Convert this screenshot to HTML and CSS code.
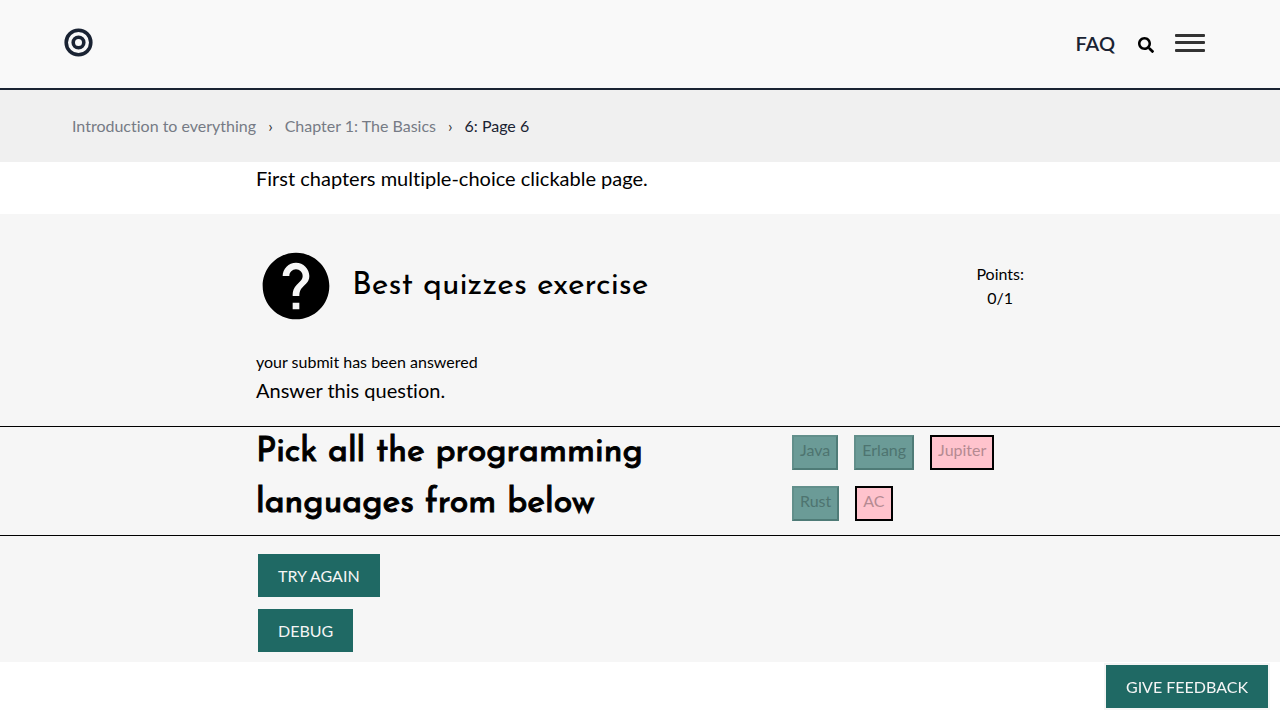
FILE: index.html
```html
<!DOCTYPE html>
<html lang="en">
<head>
<meta charset="utf-8">
<meta name="viewport" content="width=device-width, initial-scale=1">
<title>6: Page 6</title>
<link rel="stylesheet" href="styles.css">
</head>
<body>
<header class="topbar">
  <a class="logo" href="#" aria-label="Home">
    <svg viewBox="0 0 30 30" width="30" height="30" fill="none" stroke="#1a2333" stroke-width="3.6"><circle cx="14.500" cy="14.500" r="12.300"/><circle cx="14.500" cy="14.500" r="5.300"/></svg>
  </a>
  <nav class="topnav">
    <a class="faq" href="#">FAQ</a>
    <button class="icon-button" type="button" aria-label="Search">
      <svg viewBox="0 0 512 512" width="16" height="16"><path d="M505 442.700L405.300 343c-4.500-4.500-10.600-7-17-7H372c27.600-35.300 44-79.700 44-128C416 93.100 322.900 0 208 0S0 93.100 0 208s93.100 208 208 208c48.300 0 92.700-16.400 128-44v16.300c0 6.400 2.500 12.500 7 17l99.700 99.700c9.400 9.400 24.600 9.400 33.900 0l28.300-28.300c9.400-9.400 9.400-24.600.1-34zM208 336c-70.700 0-128-57.200-128-128 0-70.700 57.200-128 128-128 70.700 0 128 57.200 128 128 0 70.700-57.200 128-128 128z"/></svg>
    </button>
    <button class="icon-button menu" type="button" aria-label="Menu">
      <svg viewBox="0 0 30 18" width="30" height="18" fill="#333"><rect width="30" height="3" rx="1"/><rect y="7" width="30" height="3" rx="1"/><rect y="15" width="30" height="3" rx="1"/></svg>
    </button>
  </nav>
</header>
<nav class="breadcrumbs" aria-label="Breadcrumbs">
  <a href="#">Introduction to everything</a>
  <span class="separator">›</span>
  <a href="#">Chapter 1: The Basics</a>
  <span class="separator">›</span>
  <a class="current" href="#">6: Page 6</a>
</nav>
<main>
  <p class="intro column">First chapters multiple-choice clickable page.</p>
  <section class="exercise">
    <div class="exercise-header column">
      <svg class="exercise-icon" viewBox="0 0 24 24" width="80" height="80"><path d="M12 2C6.480 2 2 6.480 2 12s4.480 10 10 10 10-4.480 10-10S17.520 2 12 2zm1 17h-2v-2h2v2zm2.070-7.750l-.9.920C13.450 12.900 13 13.500 13 15h-2v-.5c0-1.100.450-2.100 1.170-2.830l1.240-1.260c.370-.360.590-.860.590-1.410 0-1.100-.9-2-2-2s-2 .9-2 2H8c0-2.210 1.790-4 4-4s4 1.790 4 4c0 .880-.360 1.680-.930 2.250z"/></svg>
      <h2 class="exercise-title">Best quizzes exercise</h2>
      <div class="points">Points:<br>0/1</div>
    </div>
    <div class="column">
      <p class="status">your submit has been answered</p>
      <p class="instruction">Answer this question.</p>
    </div>
    <div class="question">
      <div class="question-row column">
        <h2 class="question-title">Pick all the programming languages from below</h2>
        <div class="options">
          <button class="option" type="button" disabled>Java</button>
          <button class="option" type="button" disabled>Erlang</button>
          <button class="option wrong" type="button" disabled>Jupiter</button>
          <button class="option" type="button" disabled>Rust</button>
          <button class="option wrong" type="button" disabled>AC</button>
        </div>
      </div>
    </div>
    <div class="actions column">
      <button class="action" type="button">TRY AGAIN</button>
      <button class="action" type="button">DEBUG</button>
    </div>
  </section>
</main>
<button class="action feedback" type="button">GIVE FEEDBACK</button>
</body>
</html>
```
FILE: styles.css
```css
* { box-sizing: border-box; }
body { margin: 0; background: #fff; color: #000; font: 16px/24px Lato, sans-serif; font-variant-ligatures: none; }
p, h2 { margin: 0; }
a { color: inherit; text-decoration: none; }
button { font: inherit; }
.column { width: 100%; max-width: 768px; margin: 0 auto; }

.topbar { display: flex; align-items: center; justify-content: space-between; min-height: 90px; padding: 0 75px 2px 64px; background: #f9f9f9; border-bottom: 2px solid #1a2333; }
.logo svg, .icon-button svg, .exercise-icon { display: block; }
.topnav { display: flex; align-items: center; }
.faq { margin-right: 23px; color: #1a2333; font-size: 20px; font-weight: 600; }
.icon-button { padding: 4px 0 0; border: 0; background: none; }
.menu { margin-left: 21px; padding: 0; }

.breadcrumbs { display: flex; gap: 12px; padding: 24px 72px; background: #f0f0f0; color: #767b85; }
.separator { color: #333; }
.current { color: #1a2333; }

.intro { padding-bottom: 20px; font-size: 20px; line-height: 32px; }
.exercise { background: #f6f6f6; }
.exercise-header { display: flex; align-items: center; padding: 32px 0 24px; }
.exercise-title { margin-left: 16px; font: 400 32px/40px "Josefin Sans", Lato, sans-serif; }
.points { margin-left: auto; text-align: center; }
.instruction { padding-bottom: 20px; font-size: 20px; line-height: 32px; }
.question { border: solid #000; border-width: 1px 0; }
.question-row { display: grid; grid-template-columns: 11fr 5fr; padding-bottom: 6px; }
.question-title { font: 400 34px/51px "Josefin Sans", Lato, sans-serif; -webkit-text-stroke: 1px #000; }
.options { display: flex; flex-wrap: wrap; align-content: flex-start; gap: 16px; padding: 8px 0 0 8px; }
.option { padding: 1px 6px 6px; border: 2px solid; border-color: #628f8b #4f7b77 #4f7b77 #628f8b; background: #6b9b97; color: #4e7470; }
.wrong { border-color: #000; background: #ffc3cd; color: #b58a92; }

.actions { display: flex; flex-direction: column; align-items: flex-start; gap: 12px; padding: 18px 2px 10px; }
.action { min-height: 43px; padding: 0 20px; border: 0; background: #1f6964; color: #f5f5f5; line-height: 43px; }
.feedback { position: fixed; right: 12px; bottom: 12px; box-shadow: 0 0 0 2px #f5f5f5; }
```
